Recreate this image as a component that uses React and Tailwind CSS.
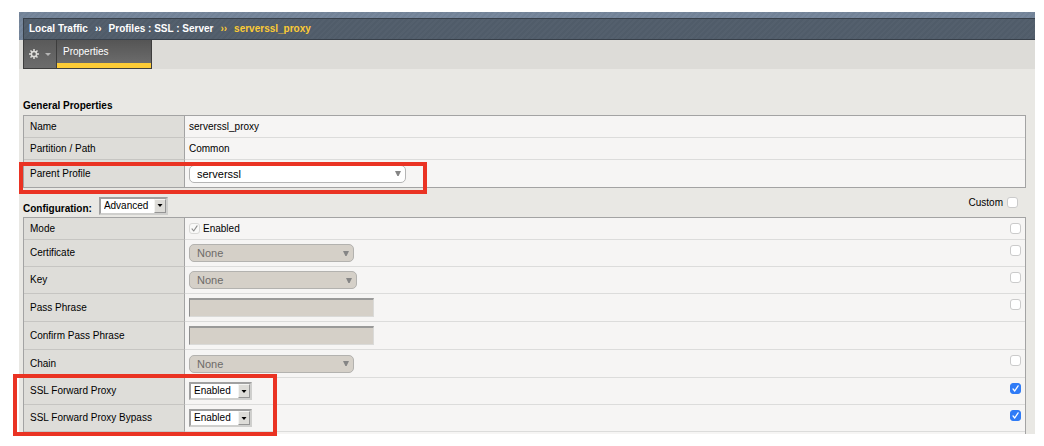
import { useState } from "react";

function CheckBox({ label, checked = false, disabled = false, id }) {
  const [on, setOn] = useState(checked);
  return (
    <span className="inline-grid size-[11px] shrink-0">
      <input
        id={id}
        type="checkbox"
        aria-label={label}
        checked={on}
        disabled={disabled}
        onChange={(e) => setOn(e.target.checked)}
        className={
          "m-0 size-[11px] appearance-none rounded-[3px] border [grid-area:1/1] " +
          (on && !disabled ? "border-[#2f7bf6] bg-[#2f7bf6]" : disabled ? "border-[#d9d9d7] bg-[#f9f9f8]" : "border-[#cbcbcb] bg-white")
        }
      />
      {on && (
        <svg viewBox="0 0 11 11" aria-hidden="true" className="pointer-events-none size-[11px] [grid-area:1/1]">
          <path
            d="M3 5.9 4.7 8 8.1 2.9"
            fill="none"
            stroke={disabled ? "#8c8c8c" : "#ffffff"}
            strokeWidth={disabled ? 1.1 : 1.3}
            strokeLinecap="round"
            strokeLinejoin="round"
          />
        </svg>
      )}
    </span>
  );
}

function RoundedSelect({ id, value, width, disabled = false }) {
  return (
    <span className={"grid h-[18px] items-center " + width}>
      <select
        id={id}
        disabled={disabled}
        className={
          "h-[18px] w-full appearance-none rounded-[5px] border px-[7px] text-[11px] leading-4 opacity-100 [grid-area:1/1] " +
          (disabled ? "border-[#b3b2af] bg-[#d5d0c8] text-[#6d6b68]" : "border-[#b5b5b5] bg-white text-black")
        }
      >
        <option>{value}</option>
      </select>
      <svg viewBox="0 0 6 5" aria-hidden="true" className="pointer-events-none mr-[5px] h-[5px] w-[6px] justify-self-end [grid-area:1/1]">
        <path d="M0 0H6L3.6 5H2.4Z" fill="#858585" />
      </svg>
    </span>
  );
}

function BevelSelect({ id, value, options, width }) {
  return (
    <span className={"grid h-[18px] items-center " + width}>
      <select
        id={id}
        defaultValue={value}
        className="h-[18px] w-full appearance-none border-2 border-t-[#a0a0a0] border-r-[#cfcfcd] border-b-[#cfcfcd] border-l-[#a0a0a0] bg-white pl-[3px] text-[10px] leading-[14px] text-black [grid-area:1/1]"
      >
        {options.map((o) => (
          <option key={o}>{o}</option>
        ))}
      </select>
      <span
        aria-hidden="true"
        className="pointer-events-none mr-[2px] flex h-[14px] w-[12px] items-center justify-center justify-self-end border border-t-[#f4f4f2] border-r-[#959595] border-b-[#959595] border-l-[#f4f4f2] bg-[#dddcd8] [grid-area:1/1]"
      >
        <svg viewBox="0 0 6 3" className="h-[3px] w-[6px]">
          <path d="M0.5 0H5.5L3 3Z" fill="#000" />
        </svg>
      </span>
    </span>
  );
}

function PhraseInput({ id }) {
  return (
    <input
      id={id}
      type="password"
      disabled
      className="block h-[19px] w-[185px] border border-t-2 border-t-[#9a9a99] border-r-[#dadad8] border-b-[#dadad8] border-l-[#8e8e8e] bg-[#d5d0c8]"
    />
  );
}

function Row({ label, htmlFor, height, children, custom, last = false, lastColumn = true }) {
  const line = last ? "" : "border-b border-b-[#dcdcdb] ";
  return (
    <tr className={height}>
      <th
        scope="row"
        className={
          "w-[161px] border-r border-r-[#a3a3a3] bg-[#deddd9] p-0 pl-[6px] text-left align-middle font-normal " +
          (last ? "" : "border-b border-b-[#c6c5c2]")
        }
      >
        {htmlFor ? <label htmlFor={htmlFor}>{label}</label> : label}
      </th>
      <td className={line + "bg-[#f6f5f4] p-0 pl-1 align-middle"}>{children}</td>
      {lastColumn && (
        <td className={line + "w-6 bg-[#f6f5f4] p-0 pr-1 align-top"}>
          {custom !== undefined && (
            <span className="flex justify-end pt-[5px]">
              <CheckBox label={"Custom " + label} checked={custom} />
            </span>
          )}
        </td>
      )}
    </tr>
  );
}

const tableBase = "w-full border-separate border-spacing-0 border border-[#a3a3a3] ";
const toggleOptions = ["Enabled", "Disabled"];

export default function App() {
  return (
    <div className="pt-3 pr-[9px] pb-3 pl-[19px] font-['Liberation_Sans',Arial,sans-serif] text-[10px] leading-3 text-black">
      <div className="bg-[#e9e8e4]">
        <header className="bg-[#74859a] bg-[repeating-linear-gradient(135deg,#ffffff05_0px,#ffffff05_2px,#00000005_2px,#00000005_4px)] pt-[6px] pl-1">
          <nav
            aria-label="Breadcrumb"
            className="flex h-[22px] items-center gap-[7px] border-y border-l border-[#38404a] bg-[#515d6b] bg-[repeating-linear-gradient(135deg,#ffffff04_0px,#ffffff04_2px,#00000004_2px,#00000004_4px)] pl-[5px] font-bold text-white"
          >
            <span>Local Traffic</span>
            <span aria-hidden="true">››</span>
            <span>Profiles : SSL : Server</span>
            <span aria-hidden="true" className="text-[#fccb35]">››</span>
            <span className="text-[#fccb35]">serverssl_proxy</span>
          </nav>
        </header>

        <div className="flex h-[29px] bg-[#dddcd8] pl-1">
          <button
            type="button"
            aria-label="Settings menu"
            className="flex w-[34px] items-center justify-center gap-[6px] border border-t-0 border-[#3d3d3d] bg-linear-to-b from-[#5a5a5a] to-[#6c6c6c]"
          >
            <svg viewBox="0 0 20 20" aria-hidden="true" className="size-[10px]">
              <g fill="none" stroke="#deddda">
                <circle cx="10" cy="10" r="5.2" strokeWidth="3" />
                <path
                  d="M10 0V4M10 16V20M0 10H4M16 10H20M3 3 6 6M14 14 17 17M17 3 14 6M6 14 3 17"
                  strokeWidth="3"
                />
              </g>
            </svg>
            <svg viewBox="0 0 6 3" aria-hidden="true" className="h-[3px] w-[6px]">
              <path d="M0 0H6L3 3Z" fill="#b5b5b5" />
            </svg>
          </button>
          <a
            href="#properties"
            className="flex w-[95px] flex-col justify-between border-r border-b border-[#3d3d3d] bg-linear-to-b from-[#555] to-[#707070] text-white"
          >
            <span className="pt-[6px] pl-[6px]">Properties</span>
            <span className="h-[5px] bg-[#fccb35]" />
          </a>
        </div>

        <main className="pt-[31px] pr-[9px] pl-1">
          <h2 className="h-[15px] font-bold">General Properties</h2>
          <div className="relative">
            <table className={tableBase}>
              <tbody>
                <Row label="Name" height="h-[22px]" lastColumn={false}>serverssl_proxy</Row>
                <Row label="Partition / Path" height="h-[22px]" lastColumn={false}>Common</Row>
                <Row label="Parent Profile" htmlFor="parent" height="h-[27px]" last lastColumn={false}>
                  <RoundedSelect id="parent" value="serverssl" width="w-[217px]" />
                </Row>
              </tbody>
            </table>
            <div aria-hidden="true" className="pointer-events-none absolute -bottom-[6px] -left-1 h-8 w-[408px] border-4 border-[#ea3323]" />
          </div>

          <div className="flex h-[29px] items-center justify-between">
            <div className="flex items-center gap-[7px] pt-[6px]">
              <h2 className="pt-[6px] font-bold">
                <label htmlFor="config">Configuration:</label>
              </h2>
              <BevelSelect id="config" value="Advanced" options={["Basic", "Advanced"]} width="w-[69px]" />
            </div>
            <div className="flex items-center gap-1 pr-2">
              <label htmlFor="custom-all">Custom</label>
              <CheckBox id="custom-all" />
            </div>
          </div>

          <div className="relative">
            <table className={tableBase + "border-b-0"}>
              <tbody>
                <Row label="Mode" htmlFor="mode" height="h-[22px]" custom={false}>
                  <span className="flex items-center gap-[3px]">
                    <CheckBox id="mode" checked disabled />
                    <span>Enabled</span>
                  </span>
                </Row>
                <Row label="Certificate" htmlFor="cert" height="h-[27px]" custom={false}>
                  <RoundedSelect id="cert" value="None" width="w-[165px]" disabled />
                </Row>
                <Row label="Key" htmlFor="key" height="h-[27px]" custom={false}>
                  <RoundedSelect id="key" value="None" width="w-[168px]" disabled />
                </Row>
                <Row label="Pass Phrase" htmlFor="pass" height="h-7" custom={false}>
                  <PhraseInput id="pass" />
                </Row>
                <Row label="Confirm Pass Phrase" htmlFor="confirm" height="h-7">
                  <PhraseInput id="confirm" />
                </Row>
                <Row label="Chain" htmlFor="chain" height="h-7" custom={false}>
                  <RoundedSelect id="chain" value="None" width="w-[165px]" disabled />
                </Row>
                <Row label="SSL Forward Proxy" htmlFor="proxy" height="h-[27px]" custom={true}>
                  <BevelSelect id="proxy" value="Enabled" options={toggleOptions} width="w-[63px]" />
                </Row>
                <Row label="SSL Forward Proxy Bypass" htmlFor="bypass" height="h-[27px]" custom={true}>
                  <BevelSelect id="bypass" value="Enabled" options={toggleOptions} width="w-[63px]" />
                </Row>
                <Row label="" height="h-[2px]" last />
              </tbody>
            </table>
            <div aria-hidden="true" className="pointer-events-none absolute -bottom-[2px] -left-[10px] h-[62px] w-[264px] border-4 border-[#ea3323]" />
          </div>
        </main>
      </div>
    </div>
  );
}
